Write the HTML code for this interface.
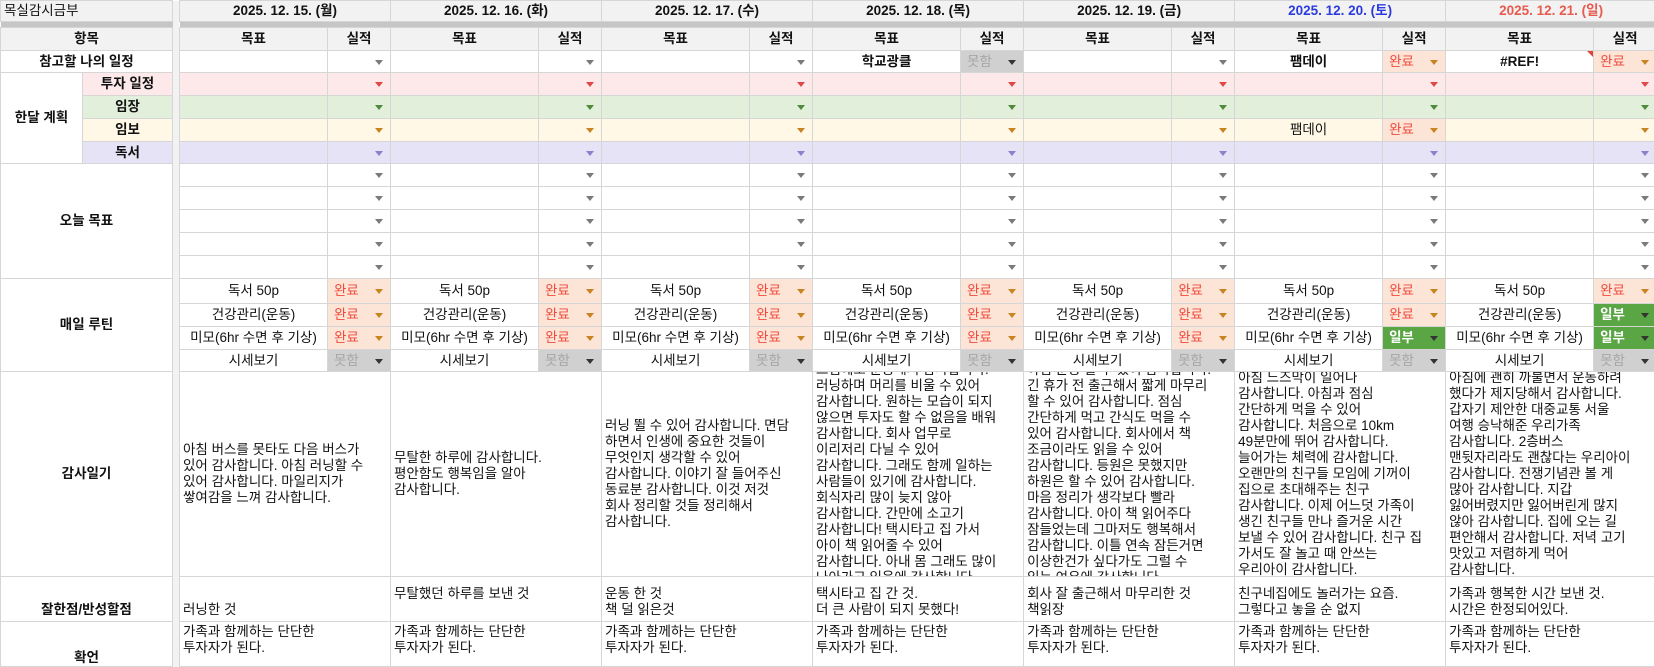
<!DOCTYPE html>
<html><head><meta charset="utf-8">
<style>
body{margin:0;width:1654px;height:665px;overflow:hidden;background:#fff;font-family:"Liberation Sans","Noto Sans CJK KR",sans-serif;font-size:13.5px;color:#111}
table{border-collapse:collapse;table-layout:fixed;width:1656px}
td{border:1px solid #d6d6d6;padding:0 3px;white-space:nowrap;overflow:hidden;text-align:center;position:relative;line-height:16px}
td.dv{background:#c6c6c6;border:none;padding:0}
tr.gap td{background:#c6c6c6;border:none;padding:0}
tr.h td{background:#f2f2f2;font-weight:bold}
td.b{font-weight:bold}
td.l{text-align:left}
i.a{position:absolute;right:7px;top:50%;margin-top:-2px;width:0;height:0;border-left:4px solid transparent;border-right:4px solid transparent;border-top:5px solid #7a7a7a}
i.r{border-top-color:#e04848}i.g{border-top-color:#4f8a3c}i.o{border-top-color:#c98422}i.p{border-top-color:#8a80cc}i.k{border-top-color:#333}
td.s{text-align:left;padding-left:6px}
.pk{background:#fde9e9}.gr{background:#e2efda}.yl{background:#fff8e6}.pu{background:#e6e3f6}
.done{background:#fce4d6;color:#f04a3c}
.no{background:#d0d0d0;color:#a6a6a6}
.part{background:#5aa544;color:#fff;font-weight:bold}
.blue{color:#2b3be0}.red{color:#e85a4f}
.di{padding:0 0 0 3px;text-align:left}
.di div{height:204px;display:flex;flex-direction:column;justify-content:center;overflow:hidden}
.bt{vertical-align:bottom;text-align:left;padding-bottom:3px}
.tp{vertical-align:top;text-align:left;padding-top:2px}
.ref::after{content:"";position:absolute;right:0;top:0;border-top:6px solid #e0443a;border-left:6px solid transparent}
</style></head><body>
<table>
<colgroup><col style="width:82px"><col style="width:90px"><col style="width:7px">
<col style="width:148px"><col style="width:63px"><col style="width:148px"><col style="width:63px"><col style="width:148px"><col style="width:63px"><col style="width:148px"><col style="width:63px"><col style="width:148px"><col style="width:63px"><col style="width:148px"><col style="width:63px"><col style="width:148px"><col style="width:63px"></colgroup>
<tr class="h" style="height:21px"><td colspan="2" class="l" style="font-weight:normal">목실감시금부</td><td class="dv" rowspan="20"></td>
<td colspan="2">2025. 12. 15. (월)</td><td colspan="2">2025. 12. 16. (화)</td><td colspan="2">2025. 12. 17. (수)</td><td colspan="2">2025. 12. 18. (목)</td><td colspan="2">2025. 12. 19. (금)</td><td colspan="2" class="blue">2025. 12. 20. (토)</td><td colspan="2" class="red">2025. 12. 21. (일)</td></tr>
<tr class="gap" style="height:6px"><td colspan="2"></td><td colspan="14"></td></tr>
<tr class="h" style="height:23px"><td colspan="2">항목</td><td>목표</td><td>실적</td><td>목표</td><td>실적</td><td>목표</td><td>실적</td><td>목표</td><td>실적</td><td>목표</td><td>실적</td><td>목표</td><td>실적</td><td>목표</td><td>실적</td></tr>
<tr style="height:22px"><td colspan="2" class="b">참고할 나의 일정</td>
<td></td><td class="s"><i class="a"></i></td><td></td><td class="s"><i class="a"></i></td><td></td><td class="s"><i class="a"></i></td>
<td class="b">학교광클</td><td class="s no">못함<i class="a k"></i></td>
<td></td><td class="s"><i class="a"></i></td>
<td class="b">팸데이</td><td class="s done">완료<i class="a o"></i></td>
<td class="b ref">#REF!</td><td class="s done">완료<i class="a o"></i></td></tr>
<tr style="height:23px"><td rowspan="4" class="b">한달 계획</td><td class="b pk">투자 일정</td>
<td class="pk"></td><td class="pk"><i class="a r"></i></td><td class="pk"></td><td class="pk"><i class="a r"></i></td><td class="pk"></td><td class="pk"><i class="a r"></i></td><td class="pk"></td><td class="pk"><i class="a r"></i></td><td class="pk"></td><td class="pk"><i class="a r"></i></td><td class="pk"></td><td class="pk"><i class="a r"></i></td><td class="pk"></td><td class="pk"><i class="a r"></i></td></tr>
<tr style="height:23px"><td class="b gr">임장</td>
<td class="gr"></td><td class="gr"><i class="a g"></i></td><td class="gr"></td><td class="gr"><i class="a g"></i></td><td class="gr"></td><td class="gr"><i class="a g"></i></td><td class="gr"></td><td class="gr"><i class="a g"></i></td><td class="gr"></td><td class="gr"><i class="a g"></i></td><td class="gr"></td><td class="gr"><i class="a g"></i></td><td class="gr"></td><td class="gr"><i class="a g"></i></td></tr>
<tr style="height:23px"><td class="b yl">임보</td>
<td class="yl"></td><td class="yl"><i class="a o"></i></td><td class="yl"></td><td class="yl"><i class="a o"></i></td><td class="yl"></td><td class="yl"><i class="a o"></i></td><td class="yl"></td><td class="yl"><i class="a o"></i></td><td class="yl"></td><td class="yl"><i class="a o"></i></td><td class="yl">팸데이</td><td class="s done">완료<i class="a o"></i></td><td class="yl"></td><td class="yl"><i class="a o"></i></td></tr>
<tr style="height:22px"><td class="b pu">독서</td>
<td class="pu"></td><td class="pu"><i class="a p"></i></td><td class="pu"></td><td class="pu"><i class="a p"></i></td><td class="pu"></td><td class="pu"><i class="a p"></i></td><td class="pu"></td><td class="pu"><i class="a p"></i></td><td class="pu"></td><td class="pu"><i class="a p"></i></td><td class="pu"></td><td class="pu"><i class="a p"></i></td><td class="pu"></td><td class="pu"><i class="a p"></i></td></tr>
<tr style="height:23px"><td colspan="2" rowspan="5" class="b">오늘 목표</td>
<td></td><td><i class="a"></i></td><td></td><td><i class="a"></i></td><td></td><td><i class="a"></i></td><td></td><td><i class="a"></i></td><td></td><td><i class="a"></i></td><td></td><td><i class="a"></i></td><td></td><td><i class="a"></i></td></tr>
<tr style="height:23px"><td></td><td><i class="a"></i></td><td></td><td><i class="a"></i></td><td></td><td><i class="a"></i></td><td></td><td><i class="a"></i></td><td></td><td><i class="a"></i></td><td></td><td><i class="a"></i></td><td></td><td><i class="a"></i></td></tr>
<tr style="height:23px"><td></td><td><i class="a"></i></td><td></td><td><i class="a"></i></td><td></td><td><i class="a"></i></td><td></td><td><i class="a"></i></td><td></td><td><i class="a"></i></td><td></td><td><i class="a"></i></td><td></td><td><i class="a"></i></td></tr>
<tr style="height:23px"><td></td><td><i class="a"></i></td><td></td><td><i class="a"></i></td><td></td><td><i class="a"></i></td><td></td><td><i class="a"></i></td><td></td><td><i class="a"></i></td><td></td><td><i class="a"></i></td><td></td><td><i class="a"></i></td></tr>
<tr style="height:23px"><td></td><td><i class="a"></i></td><td></td><td><i class="a"></i></td><td></td><td><i class="a"></i></td><td></td><td><i class="a"></i></td><td></td><td><i class="a"></i></td><td></td><td><i class="a"></i></td><td></td><td><i class="a"></i></td></tr>
<tr style="height:25px"><td colspan="2" rowspan="4" class="b">매일 루틴</td>
<td>독서 50p</td><td class="s done">완료<i class="a o"></i></td><td>독서 50p</td><td class="s done">완료<i class="a o"></i></td><td>독서 50p</td><td class="s done">완료<i class="a o"></i></td><td>독서 50p</td><td class="s done">완료<i class="a o"></i></td><td>독서 50p</td><td class="s done">완료<i class="a o"></i></td><td>독서 50p</td><td class="s done">완료<i class="a o"></i></td><td>독서 50p</td><td class="s done">완료<i class="a o"></i></td></tr>
<tr style="height:23px"><td>건강관리(운동)</td><td class="s done">완료<i class="a o"></i></td><td>건강관리(운동)</td><td class="s done">완료<i class="a o"></i></td><td>건강관리(운동)</td><td class="s done">완료<i class="a o"></i></td><td>건강관리(운동)</td><td class="s done">완료<i class="a o"></i></td><td>건강관리(운동)</td><td class="s done">완료<i class="a o"></i></td><td>건강관리(운동)</td><td class="s done">완료<i class="a o"></i></td><td>건강관리(운동)</td><td class="s part">일부<i class="a k"></i></td></tr>
<tr style="height:23px"><td>미모(6hr 수면 후 기상)</td><td class="s done">완료<i class="a o"></i></td><td>미모(6hr 수면 후 기상)</td><td class="s done">완료<i class="a o"></i></td><td>미모(6hr 수면 후 기상)</td><td class="s done">완료<i class="a o"></i></td><td>미모(6hr 수면 후 기상)</td><td class="s done">완료<i class="a o"></i></td><td>미모(6hr 수면 후 기상)</td><td class="s done">완료<i class="a o"></i></td><td>미모(6hr 수면 후 기상)</td><td class="s part">일부<i class="a k"></i></td><td>미모(6hr 수면 후 기상)</td><td class="s part">일부<i class="a k"></i></td></tr>
<tr style="height:22px"><td>시세보기</td><td class="s no">못함<i class="a k"></i></td><td>시세보기</td><td class="s no">못함<i class="a k"></i></td><td>시세보기</td><td class="s no">못함<i class="a k"></i></td><td>시세보기</td><td class="s no">못함<i class="a k"></i></td><td>시세보기</td><td class="s no">못함<i class="a k"></i></td><td>시세보기</td><td class="s no">못함<i class="a k"></i></td><td>시세보기</td><td class="s no">못함<i class="a k"></i></td></tr>
<tr style="height:204px"><td colspan="2" class="b">감사일기</td>
<td colspan="2" class="di"><div><span>아침 버스를 못타도 다음 버스가<br>있어 감사합니다. 아침 러닝할 수<br>있어 감사합니다. 마일리지가<br>쌓여감을 느껴 감사합니다.</span></div></td>
<td colspan="2" class="di"><div><span>무탈한 하루에 감사합니다.<br>평안함도 행복임을 알아<br>감사합니다.</span></div></td>
<td colspan="2" class="di"><div><span>러닝 뛸 수 있어 감사합니다. 면담<br>하면서 인생에 중요한 것들이<br>무엇인지 생각할 수 있어<br>감사합니다. 이야기 잘 들어주신<br>동료분 감사합니다. 이것 저것<br>회사 정리할 것들 정리해서<br>감사합니다.</span></div></td>
<td colspan="2" class="di"><div><span>그럼에도 운동해서 감사합니다.<br>러닝하며 머리를 비울 수 있어<br>감사합니다. 원하는 모습이 되지<br>않으면 투자도 할 수 없음을 배워<br>감사합니다. 회사 업무로<br>이리저리 다닐 수 있어<br>감사합니다. 그래도 함께 일하는<br>사람들이 있기에 감사합니다.<br>회식자리 많이 늦지 않아<br>감사합니다. 간만에 소고기<br>감사합니다! 택시타고 집 가서<br>아이 책 읽어줄 수 있어<br>감사합니다. 아내 몸 그래도 많이<br>나아가고 있음에 감사합니다.</span></div></td>
<td colspan="2" class="di"><div><span>아침 운동 할 수 있어 감사합니다.<br>긴 휴가 전 출근해서 짧게 마무리<br>할 수 있어 감사합니다. 점심<br>간단하게 먹고 간식도 먹을 수<br>있어 감사합니다. 회사에서 책<br>조금이라도 읽을 수 있어<br>감사합니다. 등원은 못했지만<br>하원은 할 수 있어 감사합니다.<br>마음 정리가 생각보다 빨라<br>감사합니다. 아이 책 읽어주다<br>잠들었는데 그마저도 행복해서<br>감사합니다. 이틀 연속 잠든거면<br>이상한건가 싶다가도 그럴 수<br>있는 여유에 감사합니다.</span></div></td>
<td colspan="2" class="di"><div><span>아침 느즈막이 일어나<br>감사합니다. 아침과 점심<br>간단하게 먹을 수 있어<br>감사합니다. 처음으로 10km<br>49분만에 뛰어 감사합니다.<br>늘어가는 체력에 감사합니다.<br>오랜만의 친구들 모임에 기꺼이<br>집으로 초대해주는 친구<br>감사합니다. 이제 어느덧 가족이<br>생긴 친구들 만나 즐거운 시간<br>보낼 수 있어 감사합니다. 친구 집<br>가서도 잘 놀고 때 안쓰는<br>우리아이 감사합니다.</span></div></td>
<td colspan="2" class="di"><div><span>아침에 괜히 까불면서 운동하려<br>했다가 제지당해서 감사합니다.<br>갑자기 제안한 대중교통 서울<br>여행 승낙해준 우리가족<br>감사합니다. 2층버스<br>맨뒷자리라도 괜찮다는 우리아이<br>감사합니다. 전쟁기념관 볼 게<br>많아 감사합니다. 지갑<br>잃어버렸지만 잃어버린게 많지<br>않아 감사합니다. 집에 오는 길<br>편안해서 감사합니다. 저녁 고기<br>맛있고 저렴하게 먹어<br>감사합니다.</span></div></td></tr>
<tr style="height:45px"><td colspan="2" class="b" style="vertical-align:bottom;padding-bottom:3px">잘한점/반성할점</td>
<td colspan="2" class="bt">러닝한 것</td>
<td colspan="2" class="bt">무탈했던 하루를 보낸 것<br>&nbsp;</td>
<td colspan="2" class="bt">운동 한 것<br>책 덜 읽은것</td>
<td colspan="2" class="bt">택시타고 집 간 것.<br>더 큰 사람이 되지 못했다!</td>
<td colspan="2" class="bt">회사 잘 출근해서 마무리한 것<br>책읽장</td>
<td colspan="2" class="bt">친구네집에도 놀러가는 요즘.<br>그렇다고 놓을 순 없지</td>
<td colspan="2" class="bt">가족과 행복한 시간 보낸 것.<br>시간은 한정되어있다.</td></tr>
<tr style="height:45px"><td colspan="2" class="b" style="vertical-align:bottom">확언</td>
<td colspan="2" class="tp">가족과 함께하는 단단한<br>투자자가 된다.</td>
<td colspan="2" class="tp">가족과 함께하는 단단한<br>투자자가 된다.</td>
<td colspan="2" class="tp">가족과 함께하는 단단한<br>투자자가 된다.</td>
<td colspan="2" class="tp">가족과 함께하는 단단한<br>투자자가 된다.</td>
<td colspan="2" class="tp">가족과 함께하는 단단한<br>투자자가 된다.</td>
<td colspan="2" class="tp">가족과 함께하는 단단한<br>투자자가 된다.</td>
<td colspan="2" class="tp">가족과 함께하는 단단한<br>투자자가 된다.</td></tr>
</table>
</body></html>
